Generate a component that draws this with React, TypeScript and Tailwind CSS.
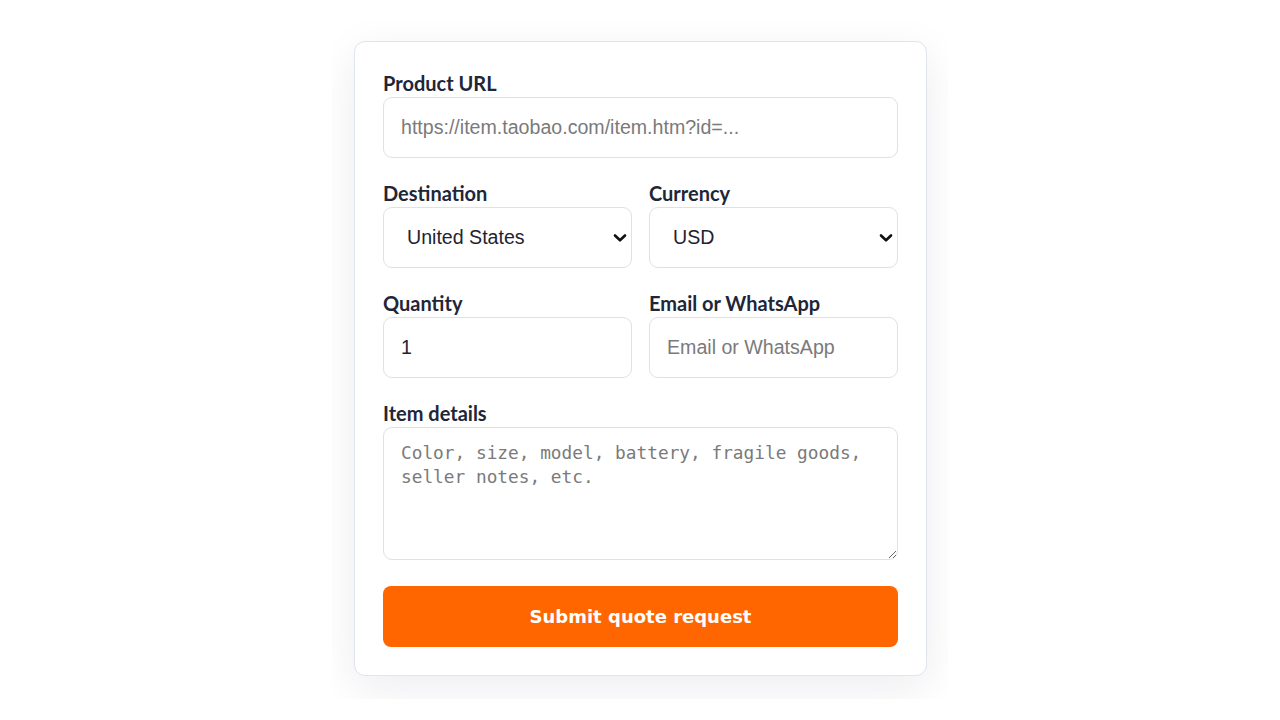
import React from 'react';

const labelCls = "block text-[20px] leading-[26px] font-bold text-[#1e2638] mb-px font-['Lato',sans-serif]";
const fieldCls =
  "w-full h-[61px] rounded-[9px] border border-[#dde1ee] bg-white px-[17px] text-[19.6px] text-[#1f2330] placeholder:text-[#7a7a7a] outline-none font-['Liberation_Sans',Arial,sans-serif]";

const Chevron: React.FC = () => (
  <svg
    className="pointer-events-none absolute right-[5px] top-1/2 -translate-y-1/2"
    width="14"
    height="10"
    viewBox="0 0 14 10"
    fill="none"
  >
    <path d="M2 2.5 7 7.3l5-4.8" stroke="#111" strokeWidth="2.6" strokeLinecap="round" strokeLinejoin="round" />
  </svg>
);

const SelectField: React.FC<{ label: string; value: string; options: string[] }> = ({ label, value, options }) => (
  <div>
    <label className={labelCls}>{label}</label>
    <div className="relative">
      <select defaultValue={value} className={fieldCls + " appearance-none pl-[23px]"}>
        {options.map(o => (
          <option key={o}>{o}</option>
        ))}
      </select>
      <Chevron />
    </div>
  </div>
);

const App: React.FC = () => {
  return (
    <div className="min-h-[720px] w-full bg-white pt-5">
      <div className="mx-auto w-[616px] overflow-hidden pl-[22px] pr-[21px] pt-[21px] pb-[23px]">
        <form
          className="rounded-[11px] border border-[#e0e4ee] bg-white p-7 shadow-[0_12px_44px_rgba(20,30,60,0.08)]"
          onSubmit={e => e.preventDefault()}
        >
          <div className="flex flex-col gap-[22px]">
            <div>
              <label className={labelCls}>Product URL</label>
              <input className={fieldCls} placeholder="https://item.taobao.com/item.htm?id=..." />
            </div>

            <div className="grid grid-cols-2 gap-[17px]">
              <SelectField label="Destination" value="United States" options={['United States', 'Canada', 'United Kingdom']} />
              <SelectField label="Currency" value="USD" options={['USD', 'EUR', 'GBP']} />
            </div>

            <div className="grid grid-cols-2 gap-[17px]">
              <div>
                <label className={labelCls}>Quantity</label>
                <input className={fieldCls} defaultValue="1" />
              </div>
              <div>
                <label className={labelCls}>Email or WhatsApp</label>
                <input className={fieldCls} placeholder="Email or WhatsApp" />
              </div>
            </div>

            <div>
              <label className={labelCls}>Item details</label>
              <textarea
                className="block w-full h-[133px] rounded-[9px] border border-[#dde1ee] bg-white px-[17px] pt-[13px] pb-[12px] text-[17.8px] leading-6 text-[#1f2330] placeholder:text-[#7a7a7a] outline-none font-['DejaVu_Sans_Mono',monospace]"
                placeholder="Color, size, model, battery, fragile goods, seller notes, etc."
              />
            </div>
          </div>

          <button
            type="submit"
            className="mt-[26px] w-full h-[61px] rounded-[8px] bg-[#ff6600] text-white text-[18px] font-bold font-['DejaVu_Sans',sans-serif]"
          >
            Submit quote request
          </button>
        </form>
      </div>
    </div>
  );
};

export default App;
